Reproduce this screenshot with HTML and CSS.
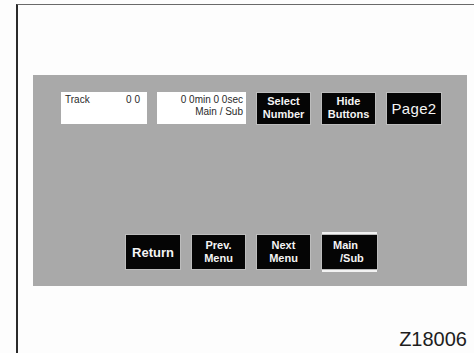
FILE: index.html
```html
<!DOCTYPE html>
<html lang="en">
<head>
    <meta charset="UTF-8">
    <meta name="viewport" content="width=device-width, initial-scale=1.0">
    <title>Main / Sub</title>
    <link rel="stylesheet" href="styles.css">
</head>
<body>
    <div class="frame">
        <div class="screen">
            <div class="row top-row">
                <div class="info track">
                    <span>Track</span>
                    <span>0 0</span>
                </div>
                <div class="info time">
                    <span>0 0min 0 0sec</span>
                    <span>Main / Sub</span>
                </div>
                <div class="btn small">Select<br>Number</div>
                <div class="btn small">Hide<br>Buttons</div>
                <div class="btn page">Page2</div>
            </div>
            <div class="row bottom-row">
                <div class="btn big">Return</div>
                <div class="btn small">Prev.<br>Menu</div>
                <div class="btn small">Next<br>Menu</div>
                <div class="selected">
                    <div class="btn small mainsub">
                        <span>Main</span>
                        <span class="sub">/Sub</span>
                    </div>
                </div>
            </div>
        </div>
        <div class="code">Z18006</div>
    </div>
</body>
</html>
```

FILE: styles.css
```css
body{
    margin: 0;
    background: #fdfdfd;
    font-family: "Liberation Sans", Arial, sans-serif;
}
.frame{
    margin: 4px 0 0 16px;
    height: 349px;
    border-top: 1px solid #6a6a6a;
    border-left: 2px solid #2a2a2a;
    overflow: hidden;
}
.screen{
    margin: 70px 0 0 15px;
    width: 434px;
    height: 211px;
    background: #a9a9a9;
    display: flex;
    flex-direction: column;
    justify-content: space-between;
    box-sizing: border-box;
    padding: 17px 0 14px 0;
}
.row{
    display: flex;
    align-items: center;
}
.top-row{
    padding-left: 28px;
}
.bottom-row{
    padding-left: 93px;
}
.info{
    height: 32px;
    background: #fff;
    box-sizing: border-box;
    color: #2a2a2a;
    font-size: 10px;
    line-height: 12px;
}
.track{
    width: 86px;
    margin-right: 10px;
    display: flex;
    justify-content: space-between;
    padding: 2px 7px 0 4px;
}
.time{
    width: 89px;
    margin-right: 11px;
    display: flex;
    flex-direction: column;
    align-items: flex-end;
    padding: 2px 3px 0 0;
}
.btn{
    background: #050505;
    color: #f4f4f4;
    font-weight: 700;
    text-align: center;
    display: flex;
    align-items: center;
    justify-content: center;
    margin-right: 12px;
    box-shadow: 0 0 0 1px #bdbdbd;
}
.small{
    width: 53px;
    height: 31px;
    font-size: 11px;
    line-height: 13px;
}
.page{
    width: 54px;
    height: 31px;
    font-size: 15px;
    font-weight: 400;
    letter-spacing: 0.3px;
}
.big{
    width: 54px;
    height: 34px;
    font-size: 13px;
}
.bottom-row .small{
    height: 34px;
}
.selected{
    border-top: 2px solid #f2f2f2;
    border-bottom: 2px solid #f2f2f2;
    padding: 1px 0;
}
.selected .btn{
    margin-right: 0;
    width: 55px;
    flex-direction: column;
    align-items: flex-start;
    padding-left: 11px;
    box-sizing: border-box;
}
.sub{
    padding-left: 7px;
}
.code{
    width: 434px;
    margin: 42px 0 0 15px;
    text-align: right;
    font-size: 20px;
    color: #1e1e1e;
}
```
